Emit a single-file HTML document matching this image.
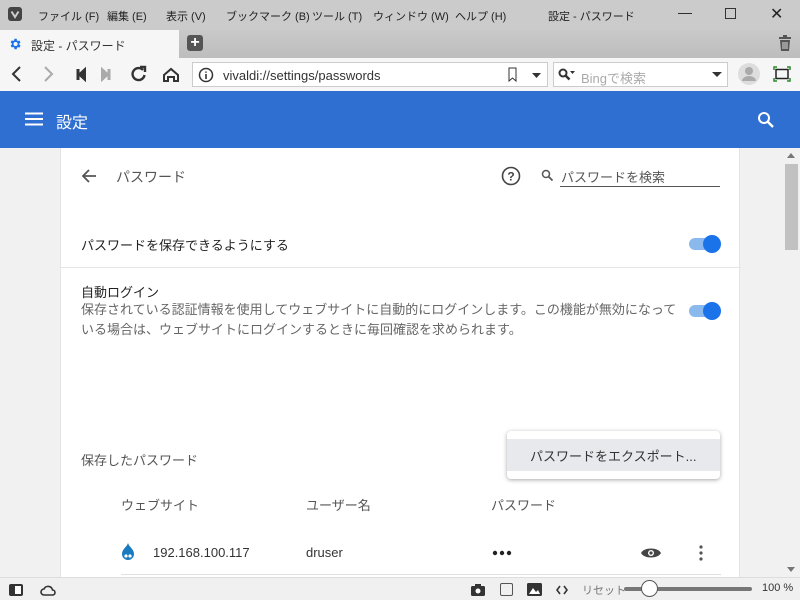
<!DOCTYPE html>
<html><head><meta charset="utf-8"><style>
*{margin:0;padding:0;box-sizing:border-box}
body{width:800px;height:600px;overflow:hidden;font-family:"Liberation Sans","Noto Sans CJK JP",sans-serif;position:relative;background:#f1f1f1;color:#333}
.a{position:absolute}
.menu{top:0;left:0;width:800px;height:30px;background:#cbcbcb;font-size:11px;color:#222}
.menu span{position:absolute;top:8px;white-space:nowrap}
.tabs{top:30px;left:0;width:800px;height:28px;background:linear-gradient(#c9c9c9,#bdbdbd)}
.tab{top:30px;left:0;width:179px;height:28px;background:#f6f6f6;font-size:12px}
.tb{top:58px;left:0;width:800px;height:33px;background:#f6f6f6}
.hdr{top:91px;left:0;width:800px;height:57px;background:#2e6fd1;color:#fff}
.card{top:148px;left:60px;width:680px;height:429px;background:#fff;border-left:1px solid #e4e4e4;border-right:1px solid #e4e4e4}
.tg{width:30px;height:12px;border-radius:6px;background:#8ab9ee}
.tg:after{content:"";position:absolute;right:-2px;top:-3px;width:18px;height:18px;border-radius:50%;background:#1a73e8}
.status{top:577px;left:0;width:800px;height:23px;background:#f0f0f0;border-top:1px solid #ddd;font-size:11px;color:#444}
.status span{white-space:nowrap}
</style></head><body>
<div class="a menu">
<div class="a" style="left:8px;top:7px;width:14px;height:14px;background:#444;border-radius:3px"><svg width="14" height="14"><path d="M3.5 4.5 L7 10 L10.5 4.5" stroke="#ccc" stroke-width="2" fill="none"/></svg></div>
<span style="left:38px">ファイル (F)</span><span style="left:107px">編集 (E)</span><span style="left:166px">表示 (V)</span><span style="left:226px">ブックマーク (B)</span><span style="left:312px">ツール (T)</span><span style="left:373px">ウィンドウ (W)</span><span style="left:455px">ヘルプ (H)</span><span style="left:548px">設定 - パスワード</span>
<span style="left:678px;top:4px;font-size:14px">—</span>
<div class="a" style="left:725px;top:8px;width:11px;height:11px;border:1px solid #333"></div>
<span style="left:770px;top:4px;font-size:16px">✕</span>
</div>
<div class="a tabs"></div>
<div class="a tab"><svg class="a" style="left:8px;top:7px" width="14" height="14" viewBox="0 0 24 24"><path fill="#1a73e8" d="M19.4 13a7.5 7.5 0 000-2l2.1-1.6-2-3.5-2.5 1a7 7 0 00-1.7-1L15 3h-4l-.4 2.7a7 7 0 00-1.7 1l-2.5-1-2 3.5L6.6 11a7.5 7.5 0 000 2l-2.1 1.6 2 3.5 2.5-1a7 7 0 001.7 1L11 21h4l.4-2.7a7 7 0 001.7-1l2.5 1 2-3.5zM13 15.5a3.5 3.5 0 110-7 3.5 3.5 0 010 7z"/></svg><span class="a" style="left:31px;top:7px;color:#333">設定 - パスワード</span></div>
<div class="a" style="left:187px;top:35px;width:16px;height:16px;background:#555;border-radius:3px;color:#fff;font-size:16px;line-height:15px;text-align:center;font-weight:bold">+</div>
<svg class="a" style="left:778px;top:35px" width="14" height="16"><rect x="1" y="2" width="12" height="2" fill="#555"/><rect x="5" y="0" width="4" height="2" fill="#555"/><path d="M2 5h10l-1 11H3z" fill="#555"/><path d="M5 7v7M7 7v7M9 7v7" stroke="#ddd"/></svg>
<div class="a tb">
<svg class="a" style="left:0;top:0" width="190" height="33" fill="none" stroke="#333" stroke-width="2"><path d="M20 9l-7 7 7 7"/><path d="M45 9l7 7-7 7" stroke="#aaa"/><path d="M78 11v11" stroke-width="3"/><path d="M85 11l-6 5.5 6 5.5z" fill="#333"/><path d="M109 11v11" stroke="#aaa" stroke-width="3"/><path d="M102 11l6 5.5-6 5.5z" fill="#aaa" stroke="#aaa"/><path d="M143 12a6 6 0 101.5 5" stroke-width="2.4"/><path d="M140 9h5v5" stroke-width="2.4"/><path d="M164 17l7-6 7 6v6h-4v-4h-6v4h-4z" stroke-width="2"/></svg>
<div class="a" style="left:192px;top:4px;width:356px;height:25px;background:#fff;border:1px solid #ccc"></div>
<svg class="a" style="left:198px;top:9px" width="16" height="16"><circle cx="8" cy="8" r="6.5" stroke="#333" stroke-width="1.5" fill="none"/><path d="M8 7v5M8 4.5v1.3" stroke="#333" stroke-width="1.6"/></svg>
<span class="a" style="left:223px;top:10px;font-size:13px;color:#333">vivaldi://settings/passwords</span>
<svg class="a" style="left:507px;top:9px" width="40" height="16"><path d="M2 1h7v13l-3.5-3-3.5 3z" stroke="#333" fill="none"/><path d="M25 6h9l-4.5 5z" fill="#333"/></svg>
<div class="a" style="left:553px;top:4px;width:175px;height:25px;background:#fff;border:1px solid #ccc"></div>
<svg class="a" style="left:558px;top:10px" width="20" height="14"><circle cx="5" cy="5" r="3.5" stroke="#333" stroke-width="2" fill="none"/><path d="M7.5 7.5l4 4" stroke="#333" stroke-width="2.5"/><path d="M12 3h5l-2.5 3z" fill="#333"/></svg>
<span class="a" style="left:581px;top:10px;font-size:13px;color:#aaa">Bingで検索</span>
<svg class="a" style="left:712px;top:14px" width="10" height="6"><path d="M0 0h10l-5 5z" fill="#333"/></svg>
<div class="a" style="left:738px;top:5px;width:22px;height:22px;border-radius:50%;background:#ddd"><svg width="22" height="22"><circle cx="11" cy="8" r="4" fill="#aaa"/><path d="M4 18a7 5 0 0114 0z" fill="#aaa"/></svg></div>
<svg class="a" style="left:773px;top:8px" width="18" height="16" fill="none"><rect x="3" y="3.5" width="12" height="9" stroke="#222" stroke-width="1.5"/><path d="M1 4V1h3M14 1h3v3M1 12v3h3M14 15h3v-3" stroke="#2a8a2a" stroke-width="1.5"/></svg>
</div>
<div class="a hdr">
<svg class="a" style="left:25px;top:21px" width="18" height="14"><path d="M0 1.5h18M0 7h18M0 12.5h18" stroke="#fff" stroke-width="2"/></svg>
<span class="a" style="left:56px;top:18px;font-size:16px">設定</span>
<svg class="a" style="left:757px;top:20px" width="18" height="18"><circle cx="7" cy="7" r="5" stroke="#fff" stroke-width="2" fill="none"/><path d="M11 11l5 5" stroke="#fff" stroke-width="2.4"/></svg>
</div>
<div class="a card">
<svg class="a" style="left:20px;top:20px" width="16" height="16"><path d="M15 8H2M8 2L2 8l6 6" stroke="#555" stroke-width="1.8" fill="none"/></svg>
<span class="a" style="left:55px;top:19px;font-size:14px;color:#555">パスワード</span>
<svg class="a" style="left:440px;top:18px" width="20" height="20"><circle cx="10" cy="10" r="8.5" stroke="#444" stroke-width="1.6" fill="none"/><text x="10" y="14.5" font-size="12" font-weight="bold" text-anchor="middle" fill="#444" font-family="Liberation Sans">?</text></svg>
<svg class="a" style="left:480px;top:21px" width="13" height="13"><circle cx="5" cy="5" r="3.5" stroke="#555" stroke-width="1.5" fill="none"/><path d="M7.5 7.5l4 4" stroke="#555" stroke-width="1.8"/></svg>
<span class="a" style="left:500px;top:19px;font-size:13px;color:#555">パスワードを検索</span>
<div class="a" style="left:499px;top:38px;width:160px;height:1px;background:#555"></div>
<span class="a" style="left:20px;top:87px;font-size:13px;color:#222">パスワードを保存できるようにする</span>
<div class="a tg" style="left:628px;top:90px"></div>
<div class="a" style="left:0;top:119px;width:680px;height:1px;background:#e6e6e6"></div>
<span class="a" style="left:20px;top:134px;font-size:13px;color:#222">自動ログイン</span>
<div class="a" style="left:20px;top:152px;width:600px;font-size:13px;line-height:20px;color:#666">保存されている認証情報を使用してウェブサイトに自動的にログインします。この機能が無効になっている場合は、ウェブサイトにログインするときに毎回確認を求められます。</div>
<div class="a tg" style="left:628px;top:157px"></div>
<span class="a" style="left:20px;top:302px;font-size:13px;color:#555">保存したパスワード</span>
<span class="a" style="left:60px;top:347px;font-size:13px;color:#555">ウェブサイト</span>
<span class="a" style="left:245px;top:347px;font-size:13px;color:#555">ユーザー名</span>
<span class="a" style="left:430px;top:347px;font-size:13px;color:#555">パスワード</span>
<svg class="a" style="left:60px;top:395px" width="14" height="18"><path d="M7 0C6 4 1 6 1 11a6 6 0 0012 0C13 6 8 4 7 0z" fill="#1a7abf"/><circle cx="5" cy="13" r="1.6" fill="#fff"/><circle cx="9" cy="13" r="1.6" fill="#fff"/></svg>
<span class="a" style="left:92px;top:397px;font-size:13px;color:#333">192.168.100.117</span>
<span class="a" style="left:245px;top:397px;font-size:13px;color:#333">druser</span>
<svg class="a" style="left:431px;top:402px" width="20" height="6"><circle cx="3" cy="3" r="2.2" fill="#222"/><circle cx="10" cy="3" r="2.2" fill="#222"/><circle cx="17" cy="3" r="2.2" fill="#222"/></svg>
<svg class="a" style="left:580px;top:398px" width="20" height="14"><path d="M0 7C3 1 17 1 20 7C17 13 3 13 0 7z" fill="#444"/><circle cx="10" cy="7" r="3" fill="#fff"/><circle cx="10" cy="7" r="1.6" fill="#444"/></svg>
<svg class="a" style="left:638px;top:397px" width="4" height="16"><circle cx="2" cy="2" r="1.6" fill="#555"/><circle cx="2" cy="8" r="1.6" fill="#555"/><circle cx="2" cy="14" r="1.6" fill="#555"/></svg>
<div class="a" style="left:60px;top:426px;width:600px;height:1px;background:#e0e0e0"></div>
</div>
<div class="a" style="left:507px;top:431px;width:213px;height:48px;background:#fff;border-radius:4px;box-shadow:0 1px 4px rgba(0,0,0,.35)"><div class="a" style="left:0;top:8px;width:213px;height:32px;background:#e8e9ec"></div><span class="a" style="left:23px;top:15px;font-size:13px;color:#333">パスワードをエクスポート...</span></div>
<div class="a" style="left:783px;top:148px;width:17px;height:429px;background:#f1f1f1"></div>
<div class="a" style="left:785px;top:164px;width:13px;height:86px;background:#c1c1c1"></div>
<svg class="a" style="left:787px;top:153px" width="9" height="6"><path d="M0 5h8L4 0z" fill="#777"/></svg>
<svg class="a" style="left:787px;top:567px" width="9" height="6"><path d="M0 0h8L4 5z" fill="#777"/></svg>
<div class="a status">
<div class="a" style="left:9px;top:6px;width:14px;height:12px;border:2px solid #333;border-radius:2px;background:linear-gradient(90deg,#333 40%,#fff 40%)"></div>
<svg class="a" style="left:40px;top:6px" width="16" height="12"><path d="M4 11a3 3 0 010-6 4.5 4.5 0 018.5 1 2.5 2.5 0 010 5z" stroke="#333" stroke-width="1.6" fill="none"/></svg>
<svg class="a" style="left:470px;top:5px" width="16" height="14"><rect x="1" y="3" width="14" height="10" rx="1.5" fill="#333"/><rect x="5" y="1" width="6" height="3" fill="#333"/><circle cx="8" cy="8" r="2.5" fill="#fff"/></svg>
<div class="a" style="left:500px;top:5px;width:13px;height:13px;border:1.5px solid #555;border-radius:2px"></div>
<svg class="a" style="left:527px;top:5px" width="15" height="13"><rect width="15" height="13" rx="1.5" fill="#333"/><path d="M2 11l4-6 3 4 2-2 2 4z" fill="#fff"/></svg>
<svg class="a" style="left:556px;top:7px" width="12" height="10"><path d="M4 1L1 5l3 4M8 1l3 4-3 4" stroke="#333" stroke-width="1.6" fill="none"/></svg>
<span class="a" style="left:582px;top:4px;color:#777;font-size:11px">リセット</span>
<div class="a" style="left:624px;top:9px;width:128px;height:4px;background:#777;border-radius:2px"></div>
<div class="a" style="left:641px;top:2px;width:17px;height:17px;border-radius:50%;background:#fff;border:1.5px solid #555"></div>
<span class="a" style="left:762px;top:4px;color:#333">100 %</span>
</div>
</body></html>
